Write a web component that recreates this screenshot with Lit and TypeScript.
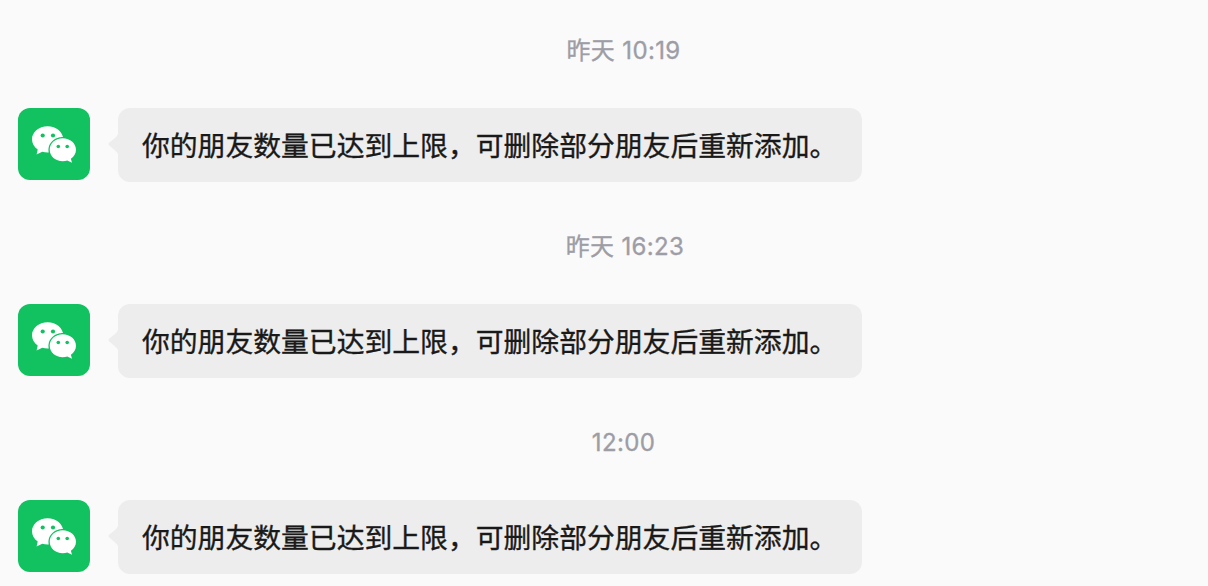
import { LitElement, html, css } from "lit";
import { customElement, property } from "lit/decorators.js";
import { classMap } from "lit/directives/class-map.js";

interface Message {
  time: string;
  text: string;
  wide?: boolean;
}

const TEXT = "你的朋友数量已达到上限，可删除部分朋友后重新添加。";

const MESSAGES: Message[] = [
  { time: "昨天 10:19", text: TEXT },
  { time: "昨天 16:23", text: TEXT, wide: true },
  { time: "12:00", text: TEXT },
];

@customElement("chat-avatar")
export class ChatAvatar extends LitElement {
  static styles = css`
    :host {
      display: block;
      flex: none;
      width: 72px;
      height: 72px;
      border-radius: 12px;
      overflow: hidden;
      background: #12c160;
    }
    .logo {
      display: block;
    }
  `;

  render() {
    return html`
      <svg class="logo" width="72" height="72" viewBox="0 0 72 72">
        <path
          fill="#fff"
          d="M29.6 18.3C21 18.3 14 24.1 14 31.3c0 4.100 2.200 7.700 5.700 10.200L18.600 46.600l5.700-2.900c1.700.5 3.500.8 5.300.8 8.600 0 15.600-5.900 15.600-13.200s-7-13-15.600-13z"
        />
        <path
          fill="#fff"
          stroke="#12c160"
          stroke-width="2.600"
          paint-order="stroke"
          d="M43.200 30.300h1.500c-7.200 0-13 5-13 11.500s5.800 11.500 13 11.500c1.700 0 3.200-.3 4.600-.8l4.700 2.300-1.100-4c3.100-2.100 5.100-5.300 5.100-9 0-6.500-5.900-11.500-13.300-11.500z"
        />
        <g fill="#12c160">
          <circle cx="24.700" cy="27.500" r="2.100" />
          <circle cx="35" cy="27.500" r="2.100" />
          <circle cx="40.300" cy="38.500" r="1.800" />
          <circle cx="49.200" cy="38.500" r="1.800" />
        </g>
      </svg>
    `;
  }
}

@customElement("chat-message")
export class ChatMessage extends LitElement {
  @property() time = "";
  @property() text = "";
  @property({ type: Boolean }) wide = false;

  static styles = css`
    :host {
      display: block;
      height: 196px;
    }
    .time {
      height: 32px;
      margin-left: 39px;
      padding: 35px 0 41px;
      text-align: center;
      font-size: 24px;
      line-height: 32px;
      letter-spacing: 0.35px;
      -webkit-text-stroke: 0.35px #9d9da6;
      color: #9d9da6;
      white-space: nowrap;
    }
    .time.wide {
      margin-left: 42px;
    }
    .row {
      display: flex;
      align-items: flex-start;
      padding-left: 18px;
    }
    .tail {
      display: block;
      flex: none;
      width: 11px;
      height: 24px;
      margin: 24px -1px 0 18px;
    }
    .bubble {
      box-sizing: border-box;
      width: 744px;
      height: 74px;
      padding: 0 24px;
      border-radius: 12px;
      background: #ededed;
      color: #191919;
      font-size: 27.82px;
      line-height: 76px;
      -webkit-text-stroke: 0.35px #191919;
      white-space: nowrap;
    }
  `;

  render() {
    return html`
      <div class=${classMap({ time: true, wide: this.wide })}>${this.time}</div>
      <div class="row">
        <chat-avatar></chat-avatar>
        <svg class="tail" viewBox="0 0 11 24">
          <path
            fill="#ededed"
            d="M11 1.500H10C9.500 3.500 8.500 4.700 7 6L1.300 10.600Q-.2 12 1.300 13.400L7 18.500C8.500 19.700 9.500 20.800 10 22.500H11z"
          />
        </svg>
        <div class="bubble">${this.text}</div>
      </div>
    `;
  }
}

@customElement("app-root")
export class AppRoot extends LitElement {
  static styles = css`
    :host {
      display: block;
      height: 586px;
      overflow: hidden;
      background: #fafafa;
      font-family: Inter, "Noto Sans CJK SC", sans-serif;
    }
  `;

  render() {
    return MESSAGES.map(
      (m) => html`<chat-message
        .time=${m.time}
        .text=${m.text}
        .wide=${m.wide ?? false}
      ></chat-message>`
    );
  }
}
